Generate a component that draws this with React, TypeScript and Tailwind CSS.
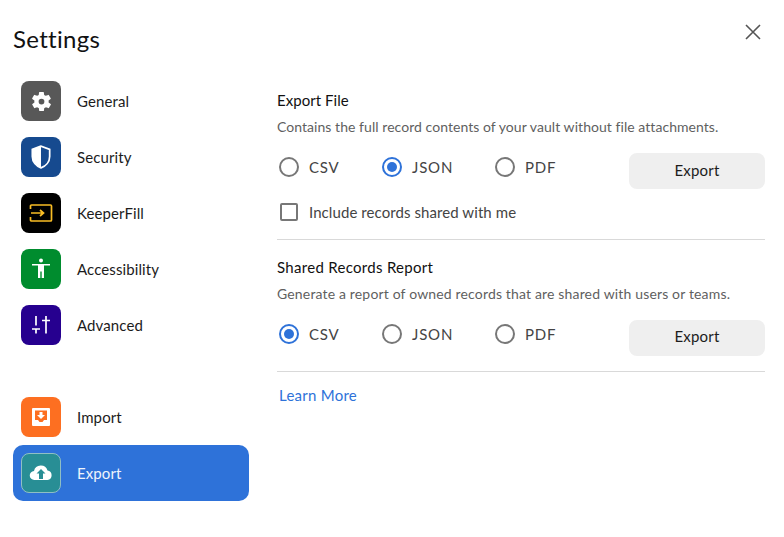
import type { ReactNode } from "react";

const FONT = "font-['Lato','Liberation_Sans',sans-serif]";

function NavItem({ label, color, active, children }: { label: string; color: string; active?: boolean; children: ReactNode }) {
  return (
    <div className={`flex h-14 w-[236px] items-center rounded-[10px] pl-2 ${active ? "bg-[#2e72d9]" : ""}`}>
      <div
        className={`flex h-10 w-10 shrink-0 items-center justify-center rounded-lg ${color} ${active ? "border border-[#8fbfc4]" : ""}`}
      >
        {children}
      </div>
      <span className={`ml-4 text-[15px] tracking-[0.1px] ${active ? "text-[#eef4fc]" : "text-[#1c1c1c]"}`}>{label}</span>
    </div>
  );
}

function Radio({ label, checked, width }: { label: string; checked?: boolean; width: string }) {
  return (
    <div className={`flex items-center ${width}`}>
      <span
        className={`flex h-5 w-5 items-center justify-center rounded-full border-2 ${checked ? "border-[#2e72d9]" : "border-[#777777]"}`}
      >
        {checked && <span className="h-2.5 w-2.5 rounded-full bg-[#2e72d9]" />}
      </span>
      <span className="ml-[10px] text-[15px] tracking-[0.8px] text-[#444444]">{label}</span>
    </div>
  );
}

function RadioRow({ selected }: { selected: string }) {
  return (
    <div className="flex items-start justify-between">
      <div className="flex items-center pl-[2px] pt-[3px]">
        <Radio label="CSV" checked={selected === "CSV"} width="w-[103px]" />
        <Radio label="JSON" checked={selected === "JSON"} width="w-[113px]" />
        <Radio label="PDF" checked={selected === "PDF"} width="w-[100px]" />
      </div>
      <button className="h-9 w-[136px] rounded-lg bg-[#efefef] pb-[2px] text-[15px] tracking-[0.2px] text-[#1c1c1c]">Export</button>
    </div>
  );
}

export default function App() {
  return (
    <div className={`relative h-[537px] w-[784px] overflow-hidden bg-white ${FONT}`}>
      <button className="absolute left-[744px] top-[23px] text-[#555555]">
        <svg width="18" height="18" viewBox="0 0 18 18" fill="none" stroke="currentColor" strokeWidth="1.6">
          <path d="M2 2 L16 16 M16 2 L2 16" />
        </svg>
      </button>

      <div className="flex h-full">
        <div className="w-[264px] shrink-0 pl-[13px] pt-[24px]">
          <h1 className="h-[49px] text-[24px] leading-[30px] tracking-[0.3px] text-[#111111]">Settings</h1>
          <NavItem label="General" color="bg-[#585858]">
            <svg width="23" height="23" viewBox="0 0 24 24" fill="#ffffff">
              <path d="M19.4 13a7.6 7.6 0 0 0 0-2l2.1-1.6a.5.5 0 0 0 .1-.7l-2-3.4a.5.5 0 0 0-.6-.2l-2.5 1a7.4 7.4 0 0 0-1.7-1l-.4-2.7a.5.5 0 0 0-.5-.4h-3.9a.5.5 0 0 0-.5.4l-.4 2.7a7.4 7.4 0 0 0-1.7 1l-2.5-1a.5.5 0 0 0-.6.2l-2 3.4a.5.5 0 0 0 .1.7L4.6 11a7.6 7.6 0 0 0 0 2l-2.1 1.6a.5.5 0 0 0-.1.7l2 3.4a.5.5 0 0 0 .6.2l2.5-1a7.4 7.4 0 0 0 1.7 1l.4 2.7a.5.5 0 0 0 .5.4h3.9a.5.5 0 0 0 .5-.4l.4-2.7a7.4 7.4 0 0 0 1.7-1l2.5 1a.5.5 0 0 0 .6-.2l2-3.4a.5.5 0 0 0-.1-.7zM12 15a3 3 0 1 1 0-6 3 3 0 0 1 0 6z" />
            </svg>
          </NavItem>
          <NavItem label="Security" color="bg-[#164a8f]">
            <svg width="24" height="26" viewBox="0 0 22 24">
              <path d="M11 2 L3 5 V11.5 C3 16.5 6.5 20.5 11 22 C15.5 20.5 19 16.5 19 11.5 V5 Z" fill="none" stroke="#ffffff" strokeWidth="1.6" />
              <path d="M11 2 L3 5 V11.5 C3 16.5 6.5 20.5 11 22 Z" fill="#ffffff" />
            </svg>
          </NavItem>
          <NavItem label="KeeperFill" color="bg-black">
            <svg width="24" height="20" viewBox="0 0 24 20" fill="none" stroke="#f9bd25" strokeWidth="1.7">
              <path d="M1.5 6 V3 a1 1 0 0 1 1-1 H21.5 a1 1 0 0 1 1 1 V17 a1 1 0 0 1-1 1 H2.5 a1 1 0 0 1-1-1 V14" />
              <path d="M2 10 H14 M11 7 L14.5 10 L11 13" />
            </svg>
          </NavItem>
          <NavItem label="Accessibility" color="bg-[#008c2e]">
            <svg width="20" height="22" viewBox="0 0 20 22" fill="#ffffff">
              <circle cx="10" cy="2.5" r="2" />
              <path d="M1 6 H19 V7.5 H13 V20 H10.7 V13.5 H9.3 V20 H7 V7.5 H1 Z" />
            </svg>
          </NavItem>
          <NavItem label="Advanced" color="bg-[#26008f]">
            <svg width="20" height="20" viewBox="0 0 20 20" fill="none" stroke="#ffffff" strokeWidth="1.7">
              <path d="M5 1 V10.5 M1 14 H9 M5 14 V18.500 M15 1 V18.500 M11 5.500 H19" />
            </svg>
          </NavItem>
          <div className="h-9" />
          <NavItem label="Import" color="bg-[#fd6f21]">
            <svg width="20" height="20" viewBox="0 0 20 20">
              <path d="M2 1 H18 a1 1 0 0 1 1 1 V18 a1 1 0 0 1-1 1 H2 a1 1 0 0 1-1-1 V2 a1 1 0 0 1 1-1 Z" fill="#ffffff" />
              <path d="M4 3.5 H16 V13 H13 L11.5 15 H8.5 L7 13 H4 Z" fill="#fd6f21" />
              <path d="M8.5 5 H11.5 V8 H14 L10 12 L6 8 H8.5 Z" fill="#ffffff" />
            </svg>
          </NavItem>
          <NavItem label="Export" color="bg-[#288e95]" active>
            <svg width="24" height="18" viewBox="0 0 24 18">
              <path d="M5.5 16 a4.500 4.500 0 0 1-.5-9 A7 7 0 0 1 18.500 6.500 a4.800 4.800 0 0 1 0 9.500 Z" fill="#ffffff" />
              <path d="M12 5 L16.500 9.500 H14 V15 H10 V9.500 H7.500 Z" fill="#288e95" />
            </svg>
          </NavItem>
        </div>

        <div className="ml-[13px] w-[488px] shrink-0 pt-[90px]">
          <h2 className="text-[15px] leading-5 tracking-[0.05px] text-[#111111]">Export File</h2>
          <p className="mt-[8px] text-[14px] leading-[18px] tracking-[0.05px] text-[#5f5f5f]">
            Contains the full record contents of your vault without file attachments.
          </p>
          <div className="mt-[17px]">
            <RadioRow selected="JSON" />
          </div>
          <div className="mt-[12px] flex items-center pl-[3px]">
            <span className="h-[18px] w-[18px] rounded-[2px] border-2 border-[#777777]" />
            <span className="ml-[11px] text-[15px] tracking-[0.08px] text-[#444444]">Include records shared with me</span>
          </div>
          <div className="mt-[15px] h-px bg-[#d9d9d9]" />

          <h2 className="mt-[17px] text-[15px] leading-5 tracking-[0.3px] text-[#111111]">Shared Records Report</h2>
          <p className="mt-[8px] text-[14px] leading-[18px] tracking-[0.16px] text-[#5f5f5f]">
            Generate a report of owned records that are shared with users or teams.
          </p>
          <div className="mt-[17px]">
            <RadioRow selected="CSV" />
          </div>
          <div className="mt-[15px] h-px bg-[#d9d9d9]" />
          <a className="mt-[12px] ml-[2px] block text-[15px] tracking-[0.25px] text-[#2e72d9]">Learn More</a>
        </div>
      </div>
    </div>
  );
}
